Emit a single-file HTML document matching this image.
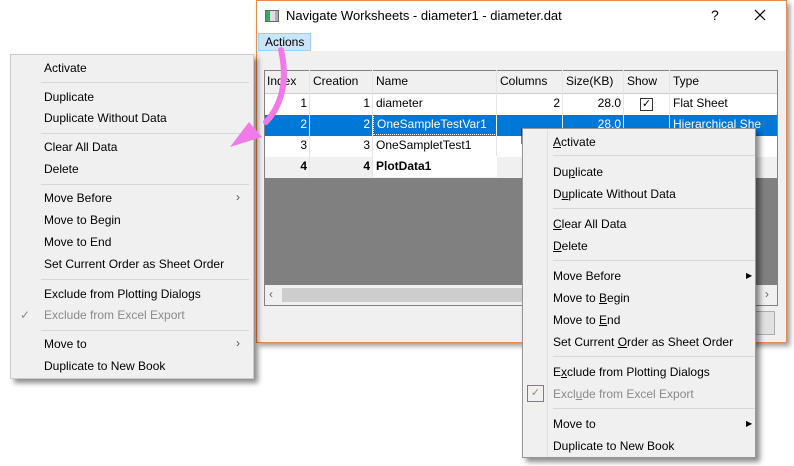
<!DOCTYPE html>
<html><head><style>
*{margin:0;padding:0;box-sizing:border-box}
body{width:794px;height:466px;background:#fff;position:relative;overflow:hidden;font-family:"Liberation Sans",sans-serif;font-size:12px;color:#000}
.abs{position:absolute}
.menu{position:absolute;background:#f0f0f0;border:1px solid #ccc;box-shadow:4px 4px 5px rgba(0,0,0,.45)}
.menu .it{position:absolute;white-space:nowrap}
.menu .sep{position:absolute;height:1px;background:#d7d7d7}
.gr{color:#8a8a8a}
u{text-decoration:underline}
.cell{position:absolute;height:21px;line-height:21px;padding:0 3px;white-space:nowrap;overflow:hidden}
.r{text-align:right}
</style></head><body>

<div class="abs" style="left:256px;top:0;width:531px;height:343px;border:1px solid #e88a4a;background:#f0f0f0;box-shadow:3px 3px 5px rgba(0,0,0,.4)">
  <div class="abs" style="left:0;top:0;width:529px;height:50px;background:#fff"></div>
  <div class="abs" style="left:8px;top:9px;width:14px;height:12px;border:1px solid #666;background:linear-gradient(90deg,#3a6 0 4px,#ddd 4px 9px,#aac 9px)"></div>
  <div class="abs" style="left:29px;top:7px;font-size:13px">Navigate Worksheets - diameter1 - diameter.dat</div>
  <div class="abs" style="left:454px;top:6px;font-size:14px">?</div>
  <svg class="abs" style="left:497px;top:8px" width="12" height="12"><path d="M1 1L11 11M11 1L1 11" stroke="#000" stroke-width="1.2"/></svg>
  <div class="abs" style="left:1px;top:32px;width:53px;height:18px;background:#cce4f7;border:1px solid #99d1ff;line-height:16px;padding-left:6px">Actions</div>
  <div class="abs" style="left:7px;top:69px;width:514px;height:236px;border:1px solid #828282;background:#808080">
    <div class="abs" style="left:0;top:0;width:512px;height:23px;background:#f0f0f0;border-bottom:1px solid #ccc"></div>
    <div class="abs" style="left:0;top:23px;width:512px;height:84px;background:#fff"></div>
    <div class="abs" style="left:0;top:44px;width:512px;height:21px;background:#0078d7"></div>
    <div class="abs" style="left:0;top:86px;width:512px;height:21px;background:#f0f0f0"></div>
    <div class="abs" style="left:0;top:214px;width:512px;height:20px;background:#f0f0f0"></div>
    <div class="abs" style="left:17px;top:217px;width:240px;height:14px;background:#cdcdcd"></div>
    <div class="abs" style="left:4px;top:216px;color:#606060">&lsaquo;</div>
    <div class="abs" style="left:500px;top:216px;color:#606060">&rsaquo;</div>
  </div>
  <div class="abs" style="left:462px;top:310px;width:56px;height:24px;border:1px solid #adadad;background:#e1e1e1"></div>
</div>
<div class="abs" style="left:264px;top:70px;width:512px">
  <div class="cell" style="left:0;top:1px">Index</div>
  <div class="cell" style="left:46px;top:1px">Creation</div>
  <div class="cell" style="left:109px;top:1px">Name</div>
  <div class="cell" style="left:233px;top:1px">Columns</div>
  <div class="cell" style="left:299px;top:1px">Size(KB)</div>
  <div class="cell" style="left:360px;top:1px">Show</div>
  <div class="cell" style="left:406px;top:1px">Type</div>
  <div class="abs" style="left:45px;top:0;width:1px;height:107px;background:#e5e5e5"></div>
  <div class="abs" style="left:108px;top:0;width:1px;height:107px;background:#e5e5e5"></div>
  <div class="abs" style="left:232px;top:0;width:1px;height:107px;background:#e5e5e5"></div>
  <div class="abs" style="left:298px;top:0;width:1px;height:107px;background:#e5e5e5"></div>
  <div class="abs" style="left:359px;top:0;width:1px;height:107px;background:#e5e5e5"></div>
  <div class="abs" style="left:405px;top:0;width:1px;height:107px;background:#e5e5e5"></div>
  <div class="cell r" style="left:0;top:23px;width:46px">1</div>
  <div class="cell r" style="left:46px;top:23px;width:63px">1</div>
  <div class="cell" style="left:109px;top:23px">diameter</div>
  <div class="cell r" style="left:233px;top:23px;width:66px">2</div>
  <div class="cell r" style="left:299px;top:23px;width:61px">28.0</div>
  <div class="abs" style="left:376px;top:28px;width:13px;height:13px;border:1px solid #333;font-size:11px;line-height:11px;text-align:center">✓</div>
  <div class="cell" style="left:406px;top:23px">Flat Sheet</div>
  <div class="cell r" style="left:0;top:44px;width:46px;color:#fff">2</div>
  <div class="cell r" style="left:46px;top:44px;width:63px;color:#fff">2</div>
  <div class="cell" style="left:109px;top:44px;width:124px;color:#fff;border:1px dotted #fff;line-height:19px">OneSampleTestVar1</div>
  <div class="cell r" style="left:299px;top:44px;width:61px;color:#fff">28.0</div>
  <div class="cell" style="left:406px;top:44px;color:#fff">Hierarchical She</div>
  <div class="cell r" style="left:0;top:65px;width:46px">3</div>
  <div class="cell r" style="left:46px;top:65px;width:63px">3</div>
  <div class="cell" style="left:109px;top:65px">OneSampletTest1</div>
  <div class="cell r" style="left:0;top:86px;width:46px;font-weight:bold">4</div>
  <div class="cell r" style="left:46px;top:86px;width:63px;font-weight:bold">4</div>
  <div class="cell" style="left:109px;top:86px;width:124px;background:#fff;font-weight:bold">PlotData1</div>
</div>
<svg class="abs" style="left:521px;top:128px" width="14" height="20"><path d="M1 1 L1 15 L4.5 11.5 L7 17 L9 16 L6.5 10.5 L11 10.5 Z" fill="#fff" stroke="#000" stroke-width="1"/></svg>

<div class="menu" style="left:10px;top:54px;width:244px;height:325px">
  <div class="it" style="left:33px;top:6px">Activate</div>
  <div class="sep" style="left:30px;top:27px;width:208px"></div>
  <div class="it" style="left:33px;top:35px">Duplicate</div>
  <div class="it" style="left:33px;top:56px">Duplicate Without Data</div>
  <div class="sep" style="left:30px;top:78px;width:208px"></div>
  <div class="it" style="left:33px;top:85px">Clear All Data</div>
  <div class="it" style="left:33px;top:107px">Delete</div>
  <div class="sep" style="left:30px;top:129px;width:208px"></div>
  <div class="it" style="left:33px;top:136px">Move Before</div><div class="it" style="left:225px;top:135px;color:#555">&rsaquo;</div>
  <div class="it" style="left:33px;top:158px">Move to Begin</div>
  <div class="it" style="left:33px;top:180px">Move to End</div>
  <div class="it" style="left:33px;top:202px">Set Current Order as Sheet Order</div>
  <div class="sep" style="left:30px;top:224px;width:208px"></div>
  <div class="it" style="left:33px;top:232px">Exclude from Plotting Dialogs</div>
  <div class="it gr" style="left:9px;top:253px">✓</div>
  <div class="it gr" style="left:33px;top:253px">Exclude from Excel Export</div>
  <div class="sep" style="left:30px;top:275px;width:208px"></div>
  <div class="it" style="left:33px;top:282px">Move to</div><div class="it" style="left:225px;top:281px;color:#555">&rsaquo;</div>
  <div class="it" style="left:33px;top:304px">Duplicate to New Book</div>
</div>

<div class="menu" style="left:522px;top:128px;width:234px;height:330px;border-color:#979797">
  <div class="abs" style="left:24px;top:0;width:1px;height:328px;background:#e0e0e0"></div>
  <div class="it" style="left:30px;top:6px"><u>A</u>ctivate</div>
  <div class="sep" style="left:30px;top:26px;width:202px"></div>
  <div class="it" style="left:30px;top:36px">Du<u>p</u>licate</div>
  <div class="it" style="left:30px;top:58px">D<u>u</u>plicate Without Data</div>
  <div class="sep" style="left:30px;top:79px;width:202px"></div>
  <div class="it" style="left:30px;top:88px"><u>C</u>lear All Data</div>
  <div class="it" style="left:30px;top:110px"><u>D</u>elete</div>
  <div class="sep" style="left:30px;top:131px;width:202px"></div>
  <div class="it" style="left:30px;top:140px">Move Before</div>
  <div class="it" style="left:223px;top:140px;font-size:8px;line-height:14px">▶</div>
  <div class="it" style="left:30px;top:162px">Move to <u>B</u>egin</div>
  <div class="it" style="left:30px;top:184px">Move to <u>E</u>nd</div>
  <div class="it" style="left:30px;top:206px">Set Current <u>O</u>rder as Sheet Order</div>
  <div class="sep" style="left:30px;top:227px;width:202px"></div>
  <div class="it" style="left:30px;top:236px">E<u>x</u>clude from Plotting Dialogs</div>
  <div class="abs" style="left:4px;top:256px;width:17px;height:17px;border:1px solid #3a8ee0;color:#888;font-size:11px;text-align:center;line-height:15px">✓</div>
  <div class="it gr" style="left:30px;top:258px">Excl<u>u</u>de from Excel Export</div>
  <div class="sep" style="left:30px;top:279px;width:202px"></div>
  <div class="it" style="left:30px;top:288px">Move to</div>
  <div class="it" style="left:223px;top:288px;font-size:8px;line-height:14px">▶</div>
  <div class="it" style="left:30px;top:310px">Duplicate to New Book</div>
</div>

<svg class="abs" style="left:220px;top:40px" width="80" height="120"><path d="M61 10 C68 40 62 65 46 82" stroke="#f07ae8" stroke-width="6" fill="none" stroke-linecap="round"/><path d="M10 107 L42 97 L29 82 Z" fill="#f07ae8"/></svg>
</body></html>
